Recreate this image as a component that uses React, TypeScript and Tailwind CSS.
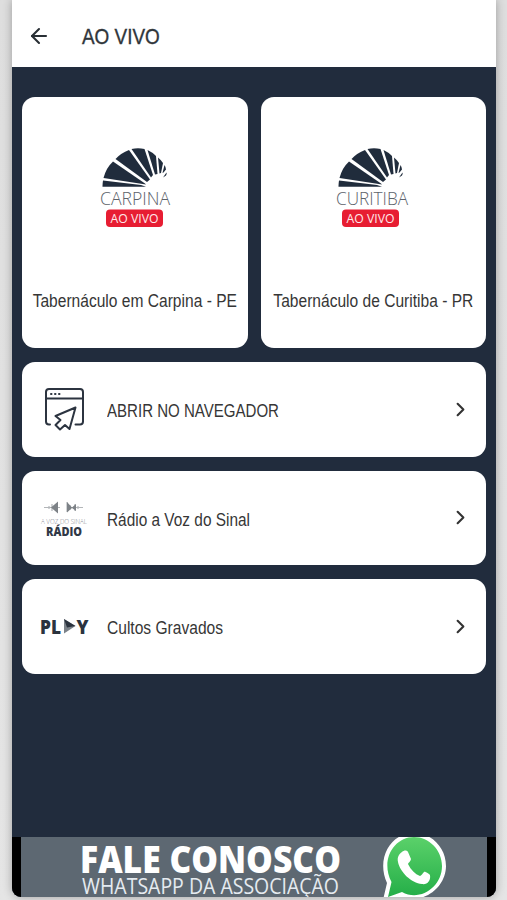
import type { ReactNode } from "react";
import { ArrowLeft, ChevronRight } from "lucide-react";

interface ChannelCardProps {
  city: string;
  cityWidth: number;
  title: string;
  logoClass: string;
}

interface MenuRowProps {
  icon: ReactNode;
  label: string;
  labelClass: string;
}

const ChannelLogo = ({ city, cityWidth }: { city: string; cityWidth: number }) => (
  <svg viewBox="0 0 80 84" className="h-[84px] w-20 overflow-visible" role="img" aria-label={city}>
    <g fill="#202c3c">
      <path d="M7.500 42.700Q7.500 39 8 36.500L46 41L51 42.700Z" />
      <path d="M8.500 34Q11 24 18 17.500L50 39.500L51 40.500Z" />
      <path d="M20.500 15Q26 9 34 6L55 35.500L52 38Z" />
      <path d="M36.500 5Q43 3.500 49.500 5L58 31L56 33.500Z" />
      <path d="M52.500 6Q57 8 61 12L62.500 30L60 30.500Z" />
      <path d="M63 13.500Q66 16 68 19L66 29L64.500 29.500Z" />
      <path d="M69.500 21Q71 23.500 71 25.500L68.500 28.500L67.500 29Z" />
      <path d="M71.500 28.500Q72 30 71 31.500L68 33.500Z" />
    </g>
    <text
      x="5"
      y="60.500"
      textLength={cityWidth}
      lengthAdjust="spacingAndGlyphs"
      fill="#5d636b"
      fontSize="18.500"
      fontWeight="300"
      fontFamily="'Open Sans', sans-serif"
    >
      {city}
    </text>
    <rect x="11" y="65.500" width="57" height="17.500" rx="4" fill="#e71d32" />
    <text
      x="15.500"
      y="79"
      textLength="48"
      lengthAdjust="spacingAndGlyphs"
      fill="#ffe9ea"
      fontSize="13"
      fontFamily="'Open Sans', sans-serif"
    >
      AO VIVO
    </text>
  </svg>
);

const ChannelCard = ({ city, cityWidth, title, logoClass }: ChannelCardProps) => (
  <div className="flex h-[251px] min-w-0 flex-1 flex-col items-center rounded-[13px] bg-white pt-[47px]">
    <div className={logoClass}>
      <ChannelLogo city={city} cityWidth={cityWidth} />
    </div>
    <span className="mt-[61px] scale-x-[0.89] text-[17.5px] leading-6 whitespace-nowrap text-[#363636]">
      {title}
    </span>
  </div>
);

const BrowserIcon = () => (
  <svg viewBox="0 0 48 48" className="size-12" fill="none" stroke="#2c3440" strokeWidth="2" strokeLinejoin="round" strokeLinecap="round">
    <path d="M9 39.500H8Q5 39.500 5 36.500V7Q5 4 8 4H39Q42 4 42 7V36.500Q42 39.500 39 39.500H34.500" />
    <path d="M5 13.500H42" />
    <path d="M10 9H10.500M14 9H14.500M18 9H18.500" />
    <path d="M34.500 22.500L14.500 31L19.500 35L14.500 40L19 44.500L24 40L28.500 44Z" />
  </svg>
);

const RadioIcon = () => (
  <svg viewBox="0 0 52 52" className="size-[52px] overflow-visible">
    <path d="M5 15.500H21M28 15.500H44M10 14V17M13 12V19M28 10V20M31 13V18M36 12V19M39 14V17" stroke="#b3b6b9" strokeWidth="1.200" />
    <path d="M12 15.500L19 9.500V21.500ZM28 10L33 15.500L37 12V19L33 16L28 20.500Z" fill="#7d8287" />
    <text x="2" y="31.500" textLength="46" lengthAdjust="spacingAndGlyphs" fontSize="7.500" fontWeight="300" fontFamily="'Open Sans', sans-serif" fill="#85898f">
      A VOZ DO SINAL
    </text>
    <text x="7" y="43.500" textLength="36" lengthAdjust="spacingAndGlyphs" fontSize="13" fontWeight="800" fontFamily="'Open Sans', sans-serif" fill="#303947">
      RÁDIO
    </text>
  </svg>
);

const PlayIcon = () => (
  <svg viewBox="0 0 52 24" className="h-6 w-[52px] overflow-visible" fill="#2b333e" fontFamily="'Open Sans', sans-serif" fontSize="19.500" fontWeight="800">
    <text x="1" y="19.500" textLength="21" lengthAdjust="spacingAndGlyphs">PL</text>
    <path d="M25 5L36.500 12L25 19.500Z" fill="#7b8289" />
    <path d="M25 5L36.500 12L28 13.500Z" />
    <text x="37.500" y="19.500" textLength="12" lengthAdjust="spacingAndGlyphs">Y</text>
  </svg>
);

const MenuRow = ({ icon, label, labelClass }: MenuRowProps) => (
  <div className="flex h-[94.500px] items-center rounded-[13px] bg-white pr-[14px] pl-[17px]">
    <div className="flex w-[52px] justify-center">{icon}</div>
    <span className={`ml-4 flex-1 origin-left pt-1 text-[17.5px] leading-6 whitespace-nowrap text-[#363636] ${labelClass}`}>
      {label}
    </span>
    <ChevronRight className="size-[23px] text-[#333]" strokeWidth={2.2} />
  </div>
);

const WhatsAppIcon = () => (
  <svg viewBox="0 0 66 60" className="h-[60px] w-[66px]">
    <defs>
      <linearGradient id="bubble" x1="0" y1="0" x2="0" y2="1">
        <stop offset="0" stopColor="#5bd16a" />
        <stop offset="1" stopColor="#24ae48" />
      </linearGradient>
    </defs>
    <path d="M2 63L6 46C-5 22 9-4 33-4C51-4 65 11 65 29C65 50 43 68 20 60Z" fill="#ffffff" />
    <path d="M7 60L10.500 45C-1 23 13 0 33 0C48 0 61 13 61 29C61 50 39 65 21 55Z" fill="url(#bubble)" />
    <path
      d="M21 15C23 13 26 13 27 15L30 22C30 24 27 26 27 27C30 33 34 37 39 39C40 39 42 36 43 35C44 34 48 37 49 38C50 44 46 48 41 47C30 46 19 35 17 25C16 20 18 17 21 15Z"
      fill="#ffffff"
    />
  </svg>
);

const ContactBanner = () => (
  <div className="flex h-[60px] justify-between overflow-hidden border-x-[9px] border-black bg-[#5d6872] pr-[40px] pl-[57px]">
    <svg viewBox="0 0 266 60" className="h-[60px] w-[266px]" fontFamily="'Open Sans', sans-serif">
      <text x="2" y="35.500" textLength="261" lengthAdjust="spacingAndGlyphs" fill="#ffffff" fontSize="36.500" fontWeight="800">
        FALE CONOSCO
      </text>
      <text x="4" y="57" textLength="257" lengthAdjust="spacingAndGlyphs" fill="#e5ebf0" fontSize="21" fontWeight="400">
        WHATSAPP DA ASSOCIAÇÃO
      </text>
    </svg>
    <WhatsAppIcon />
  </div>
);

export default function App() {
  return (
    <div className="h-[900px] w-[507px] bg-linear-to-b from-[#dedede] to-[#e5e5e5] pr-[11px] pl-3 font-['Liberation_Sans',sans-serif]">
      <main className="flex h-[897px] flex-col overflow-hidden rounded-b-[9px] bg-[#212c3d] shadow-[0_0_10px_rgba(0,0,0,0.3)]">
        <header className="flex h-[66.500px] items-center bg-white pt-1.5 pl-[15px]">
          <ArrowLeft className="size-6 text-[#292f35]" strokeWidth={2.1} />
          <h1 className="ml-[31px] origin-left scale-x-[0.88] pt-0.5 text-[21.5px] leading-6 font-normal text-[#30363b] [-webkit-text-stroke:0.35px_#30363b]">
            AO VIVO
          </h1>
        </header>

        <section className="flex flex-1 flex-col gap-3.5 px-2.5 pt-[30.500px]">
          <div className="flex gap-[13px]">
            <ChannelCard city="CARPINA" cityWidth={70} title="Tabernáculo em Carpina - PE" logoClass="pr-0" />
            <ChannelCard city="CURITIBA" cityWidth={72} title="Tabernáculo de Curitiba - PR" logoClass="pr-1" />
          </div>
          <MenuRow icon={<BrowserIcon />} label="ABRIR NO NAVEGADOR" labelClass="scale-x-[0.86]" />
          <MenuRow icon={<RadioIcon />} label="Rádio a Voz do Sinal" labelClass="scale-x-[0.88]" />
          <MenuRow icon={<PlayIcon />} label="Cultos Gravados" labelClass="scale-x-[0.89]" />
        </section>

        <ContactBanner />
      </main>
    </div>
  );
}
